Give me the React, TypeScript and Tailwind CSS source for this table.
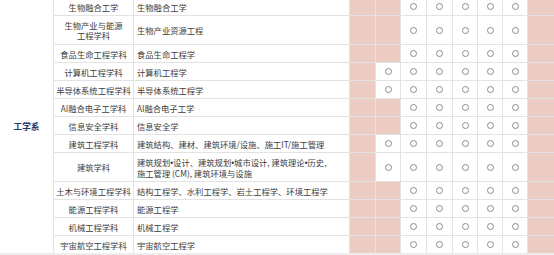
import React from "react";

type Row = {
  dept: string[];
  major: string[];
  tall?: boolean;
  extra?: boolean; // circle in the second pink column
};

const ROWS: Row[] = [
  { dept: ["生物融合工学"], major: ["生物融合工学"] },
  { dept: ["生物产业与能源", "工程学科"], major: ["生物产业资源工程"], tall: true },
  { dept: ["食品生命工程学科"], major: ["食品生命工程学"] },
  { dept: ["计算机工程学科"], major: ["计算机工程学"], extra: true },
  { dept: ["半导体系统工程学科"], major: ["半导体系统工程学"], extra: true },
  { dept: ["AI融合电子工学科"], major: ["AI融合电子工学"] },
  { dept: ["信息安全学科"], major: ["信息安全学"] },
  { dept: ["建筑工程学科"], major: ["建筑结构、建材、建筑环境/设施、施工IT/施工管理"], extra: true },
  {
    dept: ["建筑学科"],
    major: ["建筑规划•设计、建筑规划•城市设计, 建筑理论•历史,", "施工管理 (CM), 建筑环境与设施"],
    tall: true,
    extra: true,
  },
  { dept: ["土木与环境工程学科"], major: ["结构工程学、水利工程学、岩土工程学、环境工程学"] },
  { dept: ["能源工程学科"], major: ["能源工程学"] },
  { dept: ["机械工程学科"], major: ["机械工程学"] },
  { dept: ["宇宙航空工程学科"], major: ["宇宙航空工程学"] },
];

// lines joined by <br/>; the bullet is narrow in the original, so it gets a latin face
function Lines({ lines }: { lines: string[] }) {
  return (
    <>
      {lines.map((text, li) => (
        <React.Fragment key={li}>
          {li > 0 && <br />}
          {text.split("•").map((p, i) => (
            <React.Fragment key={i}>
              {i > 0 && <span className="font-['Liberation_Sans',sans-serif]">•</span>}
              {p}
            </React.Fragment>
          ))}
        </React.Fragment>
      ))}
    </>
  );
}

function Mark({ on }: { on: boolean }) {
  return (
    <div className={on ? "bg-white flex items-center justify-center" : "bg-[#ecccc3]"}>
      {on && <span className="block w-[7px] h-[7px] rounded-full border border-[#8c8c8c]" />}
    </div>
  );
}

export default function App() {
  return (
    <div className="w-[554px] h-[255px] overflow-hidden bg-[#eeeeee] text-[#3c3c3c] text-[8.3px] leading-[10px] font-['Noto_Sans_CJK_SC','Noto_Sans',sans-serif]">
      <div className="-mt-[2px] grid gap-px bg-[#e3e3e3] grid-cols-[53px_79px_215px_25px_24px_25px_25px_24px_24px_24px_26px] grid-rows-[17px_28px_17px_17px_17px_17px_17px_17px_28px_17px_17px_17px_17px]">
        <div className="row-span-13 bg-white flex items-center justify-center font-bold text-[#24396a] text-[8.6px]">
          工学系
        </div>
        {ROWS.map((r, i) => (
          <React.Fragment key={i}>
            <div className="bg-white flex items-center justify-center text-center whitespace-nowrap">
              <p>
                <Lines lines={r.dept} />
              </p>
            </div>
            <div className="bg-white flex items-center pl-[3px] whitespace-nowrap">
              <p>
                <Lines lines={r.major} />
              </p>
            </div>
            <Mark on={false} />
            <Mark on={!!r.extra} />
            <Mark on />
            <Mark on />
            <Mark on />
            <Mark on />
            <Mark on />
            <Mark on={false} />
          </React.Fragment>
        ))}
      </div>
    </div>
  );
}
